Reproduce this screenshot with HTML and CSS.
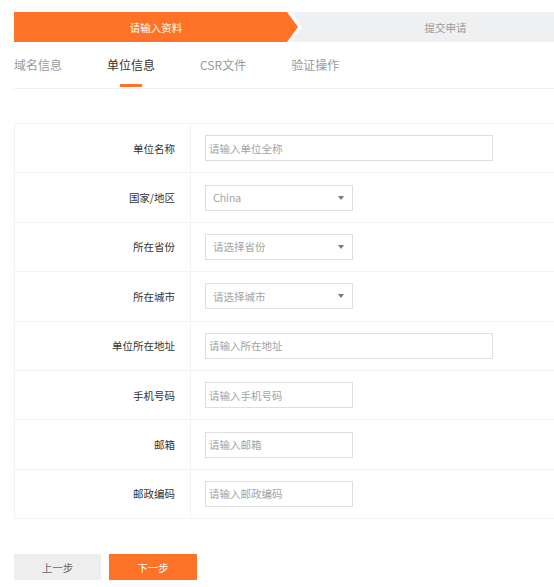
FILE: index.html
```html
<!DOCTYPE html>
<html lang="zh-CN">
<head>
<meta charset="utf-8">
<title>单位信息</title>
<link rel="stylesheet" href="styles.css">
</head>
<body>
<div class="page">
  <div class="steps">
    <div class="step step-active">请输入资料</div>
    <div class="step step-next">提交申请</div>
  </div>
  <div class="tabs">
    <div class="tab">域名信息</div>
    <div class="tab tab-active">单位信息</div>
    <div class="tab">CSR文件</div>
    <div class="tab">验证操作</div>
  </div>
  <div class="form">
    <div class="row"><div class="label">单位名称</div><div class="field"><div class="input wide">请输入单位全称</div></div></div>
    <div class="row"><div class="label">国家/地区</div><div class="field"><div class="input select">China<span class="caret"></span></div></div></div>
    <div class="row"><div class="label">所在省份</div><div class="field"><div class="input select">请选择省份<span class="caret"></span></div></div></div>
    <div class="row"><div class="label">所在城市</div><div class="field"><div class="input select">请选择城市<span class="caret"></span></div></div></div>
    <div class="row"><div class="label">单位所在地址</div><div class="field"><div class="input wide">请输入所在地址</div></div></div>
    <div class="row"><div class="label">手机号码</div><div class="field"><div class="input">请输入手机号码</div></div></div>
    <div class="row"><div class="label">邮箱</div><div class="field"><div class="input">请输入邮箱</div></div></div>
    <div class="row"><div class="label">邮政编码</div><div class="field"><div class="input">请输入邮政编码</div></div></div>
  </div>
  <div class="actions">
    <div class="btn btn-prev">上一步</div>
    <div class="btn btn-next">下一步</div>
  </div>
</div>
</body>
</html>
```
FILE: styles.css
```css
html, body {
  margin: 0;
  padding: 0;
  overflow: hidden;
  background: #fff;
}
body {
  font-family: "Noto Sans CJK SC", "Noto Sans", sans-serif;
  color: #333;
}
.page {
  width: 540px;
  padding: 12px 0 0 14px;
}
.steps {
  display: flex;
  height: 30px;
}
.step {
  display: flex;
  align-items: center;
  justify-content: center;
  font-size: 10.5px;
  height: 30px;
}
.step-active {
  width: 284px;
  flex: none;
  background: #fe7327;
  color: #fff;
  clip-path: polygon(0 0, calc(100% - 11px) 0, 100% 50%, calc(100% - 11px) 100%, 0 100%);
}
.step-next {
  flex: 1;
  margin-left: -7px;
  padding-left: 46px;
  background: #eff0f2;
  color: #999;
  clip-path: polygon(0 0, 100% 0, 100% 100%, 0 100%, 11px 50%);
}
.tabs {
  display: flex;
  gap: 45px;
  height: 46px;
  border-bottom: 1px solid #efefef;
}
.tab {
  font-size: 12px;
  line-height: 16px;
  padding-top: 15px;
  color: #999;
}
.tab-active {
  color: #333;
}
.tab-active::after {
  content: "";
  display: block;
  width: 22px;
  height: 3px;
  margin: 11px auto 0;
  background: #fe7327;
}
.form {
  margin-top: 34px;
  border: 1px solid #f3f3f3;
  border-right: none;
}
.row {
  display: grid;
  grid-template-columns: 176px 1fr;
  height: 49.4px;
  box-sizing: border-box;
  border-bottom: 1px solid #f3f3f3;
}
.row:last-child {
  border-bottom: none;
  height: 48.4px;
}
.label {
  display: flex;
  align-items: center;
  justify-content: flex-end;
  padding-right: 15px;
  font-size: 10.5px;
  color: #333;
  border-right: 1px solid #f3f3f3;
}
.field {
  display: flex;
  align-items: center;
  padding-left: 14px;
}
.input {
  box-sizing: border-box;
  width: 148px;
  height: 26px;
  border: 1px solid #dedede;
  padding-left: 3px;
  display: flex;
  align-items: center;
  font-size: 10.5px;
  color: #a3a3a3;
}
.input.wide {
  width: 288px;
}
.input.select {
  padding-left: 7px;
  padding-right: 8px;
  justify-content: space-between;
}
.caret {
  width: 0;
  height: 0;
  border-left: 3.5px solid transparent;
  border-right: 3.5px solid transparent;
  border-top: 4px solid #7a7a7a;
}
.actions {
  display: flex;
  gap: 8px;
  margin-top: 35px;
}
.btn {
  height: 26px;
  display: flex;
  align-items: center;
  justify-content: center;
  font-size: 10.5px;
}
.btn-prev {
  width: 87px;
  background: #eeeeee;
  color: #666;
}
.btn-next {
  width: 88px;
  background: #fe7327;
  color: #fff;
}
```
